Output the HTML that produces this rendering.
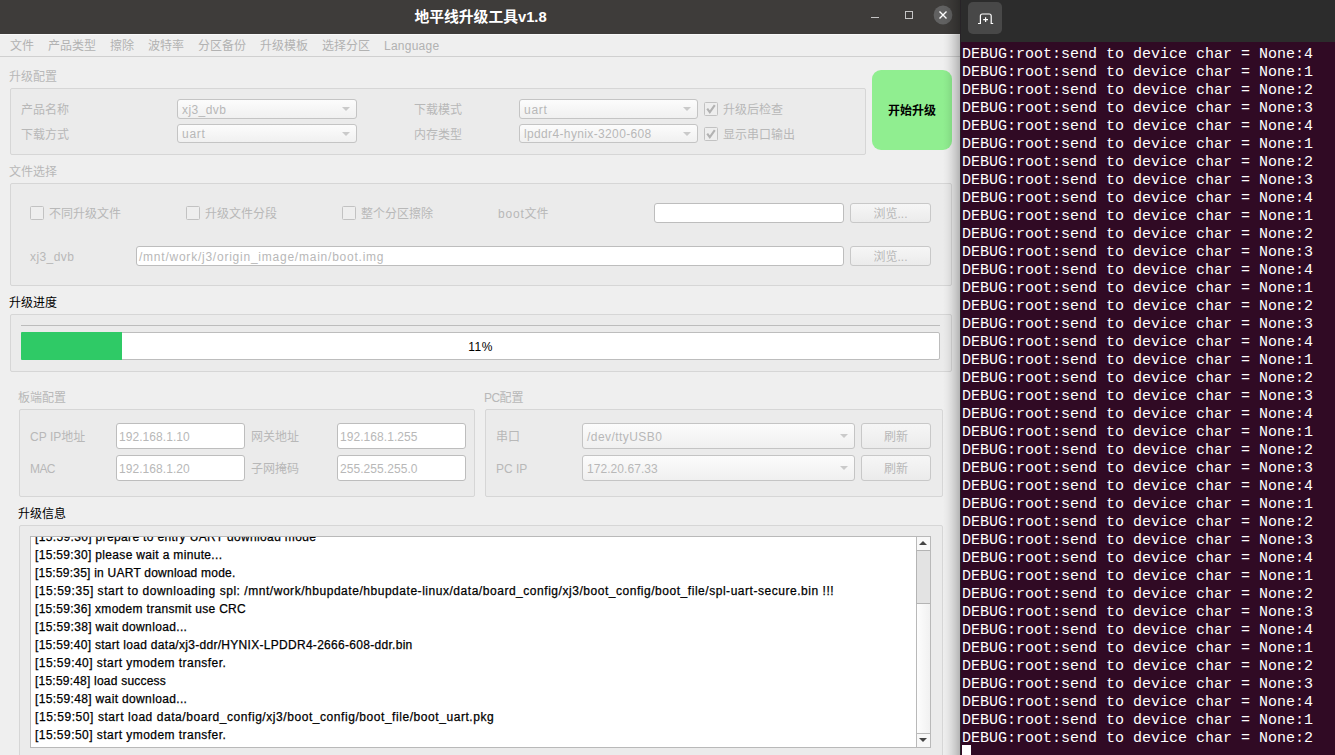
<!DOCTYPE html>
<html lang="zh-CN"><head><meta charset="utf-8"><title>地平线升级工具v1.8</title>
<style>
html,body{margin:0;padding:0;}
body{width:1335px;height:755px;overflow:hidden;position:relative;background:#efefef;
 font-family:"Liberation Sans","Noto Sans CJK SC",sans-serif;font-size:12px;color:#a3a3a3;}
.abs{position:absolute;}
#app{position:absolute;left:0;top:0;width:960px;height:755px;background:#efefef;overflow:hidden;}
#titlebar{position:absolute;left:0;top:0;width:960px;height:34px;background:#3e3c3a;}
#title{position:absolute;left:0;top:0;width:961px;height:34px;line-height:35px;text-align:center;color:#fff;font-weight:bold;font-size:14.8px;}
#menubar{position:absolute;left:0;top:34px;width:960px;height:22px;border-bottom:1px solid #d0d0d0;background:#efefef;box-shadow:inset 0 1px 0 #f9f9f9;}
.mi{position:absolute;top:0;height:22px;line-height:24px;white-space:nowrap;color:#b2b2b2;}
.lbl{position:absolute;white-space:nowrap;height:20px;line-height:20px;color:#b8b8b8;}
.blk{color:#000;}
.gb{position:absolute;box-sizing:border-box;border:1px solid #d6d6d6;background:#ebebeb;border-radius:2px;}
.combo{position:absolute;box-sizing:border-box;border:1px solid #c4c4c4;border-radius:3px;background:linear-gradient(#fcfcfc,#f0f0f0);color:#b8b8b8;white-space:nowrap;padding-left:4px;}
.combo:after{content:"";position:absolute;right:6px;top:50%;margin-top:-2px;border-left:4px solid transparent;border-right:4px solid transparent;border-top:4px solid #cacaca;}
.inp{position:absolute;box-sizing:border-box;border:1px solid #bdbdbd;border-radius:3px;background:#fff;color:#b8b8b8;white-space:nowrap;padding-left:2px;overflow:hidden;}
.btn{position:absolute;box-sizing:border-box;border:1px solid #c8c8c8;border-radius:3px;background:linear-gradient(#f6f6f6,#ebebeb);color:#b8b8b8;text-align:center;white-space:nowrap;}
.cb{position:absolute;box-sizing:border-box;width:14px;height:14px;border:1px solid #c2c2c2;border-radius:1.5px;background:#eeeeee;}
#start{position:absolute;left:872px;top:70px;width:80px;height:80px;border-radius:9px;background:#90ee90;color:#000;font-weight:bold;text-align:center;line-height:82px;font-size:12px;}
#term{position:absolute;left:960px;top:0;width:375px;height:755px;background:#300a24;overflow:hidden;}
#thead{position:absolute;left:0;top:0;width:375px;height:42px;background:#2c2c2c;}
#tedge{position:absolute;left:0;top:0;width:1px;height:755px;background:#272327;}
#tab{position:absolute;left:8px;top:2px;width:34px;height:32px;border-radius:5px;background:#484848;}
#tbody{position:absolute;left:2px;top:46px;font-family:"Liberation Mono","DejaVu Sans Mono",monospace;font-size:15px;color:#fff;}
.tl{height:18px;line-height:18px;white-space:pre;}
#cursor{position:absolute;left:2px;top:745px;width:9px;height:10px;background:#fff;}
#shadow{position:absolute;left:943px;top:0;width:17px;height:755px;background:linear-gradient(to right,rgba(0,0,0,0) 0%,rgba(0,0,0,0.031) 25%,rgba(0,0,0,0.088) 50%,rgba(0,0,0,0.162) 75%,rgba(0,0,0,0.25) 100%);}
#logbox{position:absolute;left:30px;top:536px;width:901px;height:212px;box-sizing:border-box;border:1px solid #b9b9b9;background:#fff;overflow:hidden;color:#000;}
#logtxt{position:absolute;left:4px;top:-9px;-webkit-text-stroke:0.25px #000;}
.ll{height:18px;line-height:18px;white-space:nowrap;}
#sb{position:absolute;left:885px;top:0;width:13px;height:210px;background:linear-gradient(to right,#fdfdfd,#f1f1f1);border-left:1px solid #b9b9b9;}
#sbthumb{position:absolute;left:-1px;top:13px;width:14px;height:54px;background:#e3e3e3;border:1px solid #b4b4b4;border-right:none;box-sizing:border-box;}
.sbbtn{position:absolute;left:0;width:13px;height:13px;background:#f8f8f8;}
.arr{position:absolute;left:2px;width:0;height:0;border-left:4px solid transparent;border-right:4px solid transparent;}
#prog{position:absolute;left:21px;top:332px;width:919px;height:28px;box-sizing:border-box;border:1px solid #bdbdbd;border-radius:2px;background:#fff;color:#000;text-align:center;line-height:28px;}
#progfill{position:absolute;left:-1px;top:-1px;width:101px;height:28px;background:#2fca66;border-radius:1px 0 0 1px;}

</style></head>
<body>
<div id="app">
 <div id="titlebar"></div>
 <div id="title">地平线升级工具<span style="letter-spacing:-0.053px">v1.8</span></div>
 <svg class="abs" style="left:860px;top:0" width="101" height="33" viewBox="0 0 101 33">
  <rect x="11" y="17" width="8" height="1" fill="#c4c4c4"/>
  <rect x="45.5" y="11.5" width="7" height="7" fill="none" stroke="#c4c4c4" stroke-width="1"/>
  <circle cx="83" cy="15" r="9.4" fill="#616161"/>
  <path d="M79.5 11.5 L86.5 18.5 M86.5 11.5 L79.5 18.5" stroke="#fff" stroke-width="1.4" fill="none"/>
 </svg>
 <div id="menubar">
  <span class="mi" style="left:10px">文件</span>
  <span class="mi" style="left:48px">产品类型</span>
  <span class="mi" style="left:110px">擦除</span>
  <span class="mi" style="left:148px">波特率</span>
  <span class="mi" style="left:198px">分区备份</span>
  <span class="mi" style="left:260px">升级模板</span>
  <span class="mi" style="left:322px">选择分区</span>
  <span class="mi" style="left:384px"><span style="letter-spacing:0.238px">Language</span></span>
 </div>

 <div class="lbl" style="left:9px;top:67px">升级配置</div>
 <div class="gb" style="left:10px;top:88px;width:856px;height:67px"></div>
 <div class="lbl" style="left:21px;top:100px">产品名称</div>
 <div class="combo" style="left:177px;top:99px;width:180px;height:20px;line-height:20px"><span style="letter-spacing:0.417px">xj3_dvb</span></div>
 <div class="lbl" style="left:21px;top:125px">下载方式</div>
 <div class="combo" style="left:177px;top:124px;width:180px;height:19px;line-height:19px"><span style="letter-spacing:0.706px">uart</span></div>
 <div class="lbl" style="left:414px;top:100px">下载模式</div>
 <div class="combo" style="left:519px;top:99px;width:179px;height:20px;line-height:20px"><span style="letter-spacing:0.706px">uart</span></div>
 <div class="lbl" style="left:414px;top:125px">内存类型</div>
 <div class="combo" style="left:519px;top:124px;width:179px;height:19px;line-height:19px"><span style="letter-spacing:0.359px">lpddr4-hynix-3200-608</span></div>
 <div class="cb" style="left:704px;top:102px"><svg width="12" height="12" viewBox="0 0 12 12" style="position:absolute;left:0;top:0"><path d="M2.2 5.6 L4.8 9.2 L9.8 2.2" stroke="#b2b2b2" stroke-width="2.1" fill="none"/></svg></div>
 <div class="lbl" style="left:723px;top:100px">升级后检查</div>
 <div class="cb" style="left:704px;top:127px"><svg width="12" height="12" viewBox="0 0 12 12" style="position:absolute;left:0;top:0"><path d="M2.2 5.6 L4.8 9.2 L9.8 2.2" stroke="#b2b2b2" stroke-width="2.1" fill="none"/></svg></div>
 <div class="lbl" style="left:723px;top:125px">显示串口输出</div>
 <div id="start">开始升级</div>

 <div class="lbl" style="left:9px;top:162px">文件选择</div>
 <div class="gb" style="left:10px;top:183px;width:942px;height:103px"></div>
 <div class="cb" style="left:30px;top:206px"></div>
 <div class="lbl" style="left:49px;top:204px">不同升级文件</div>
 <div class="cb" style="left:186px;top:206px"></div>
 <div class="lbl" style="left:205px;top:204px">升级文件分段</div>
 <div class="cb" style="left:342px;top:206px"></div>
 <div class="lbl" style="left:361px;top:204px">整个分区擦除</div>
 <div class="lbl" style="left:498px;top:204px"><span style="letter-spacing:0.805px">boot</span>文件</div>
 <div class="inp" style="left:654px;top:203px;width:190px;height:20px"></div>
 <div class="btn" style="left:850px;top:203px;width:81px;height:20px;line-height:20px">浏览<span style="letter-spacing:0.040px">...</span></div>
 <div class="lbl" style="left:30px;top:247px"><span style="letter-spacing:0.417px">xj3_dvb</span></div>
 <div class="inp" style="left:136px;top:246px;width:708px;height:20px;line-height:20px"><span style="letter-spacing:0.766px">/mnt/work/j3/origin_image/main/boot.img</span></div>
 <div class="btn" style="left:850px;top:246px;width:81px;height:20px;line-height:20px">浏览<span style="letter-spacing:0.040px">...</span></div>

 <div class="lbl blk" style="left:9px;top:293px">升级进度</div>
 <div class="gb" style="left:10px;top:314px;width:942px;height:58px"></div>
 <div class="abs" style="left:21px;top:325px;width:919px;height:1px;background:#bcbcbc"></div>
 <div id="prog"><div id="progfill"></div><span style="letter-spacing:0.509px">11%</span></div>

 <div class="lbl" style="left:18px;top:388px">板端配置</div>
 <div class="gb" style="left:19px;top:409px;width:456px;height:88px"></div>
 <div class="lbl" style="left:30px;top:427px"><span style="letter-spacing:0.035px">CP IP</span>地址</div>
 <div class="inp" style="left:116px;top:423px;width:129px;height:26px;line-height:26px"><span style="letter-spacing:0.060px">192.168.1.10</span></div>
 <div class="lbl" style="left:251px;top:427px">网关地址</div>
 <div class="inp" style="left:337px;top:423px;width:129px;height:26px;line-height:26px"><span style="letter-spacing:0.060px">192.168.1.255</span></div>
 <div class="lbl" style="left:30px;top:459px"><span style="letter-spacing:-0.600px">MAC</span></div>
 <div class="inp" style="left:116px;top:455px;width:129px;height:26px;line-height:26px"><span style="letter-spacing:0.060px">192.168.1.20</span></div>
 <div class="lbl" style="left:251px;top:459px">子网掩码</div>
 <div class="inp" style="left:337px;top:455px;width:129px;height:26px;line-height:26px"><span style="letter-spacing:0.060px">255.255.255.0</span></div>

 <div class="lbl" style="left:484px;top:388px"><span style="letter-spacing:-0.612px">PC</span>配置</div>
 <div class="gb" style="left:485px;top:409px;width:458px;height:88px"></div>
 <div class="lbl" style="left:496px;top:427px">串口</div>
 <div class="combo" style="left:582px;top:423px;width:273px;height:26px;line-height:26px"><span style="letter-spacing:0.447px">/dev/ttyUSB0</span></div>
 <div class="btn" style="left:861px;top:423px;width:70px;height:26px;line-height:26px">刷新</div>
 <div class="lbl" style="left:496px;top:459px"><span style="letter-spacing:-0.009px">PC IP</span></div>
 <div class="combo" style="left:582px;top:455px;width:273px;height:26px;line-height:26px"><span style="letter-spacing:0.060px">172.20.67.33</span></div>
 <div class="btn" style="left:861px;top:455px;width:70px;height:26px;line-height:26px">刷新</div>

 <div class="lbl blk" style="left:18px;top:504px">升级信息</div>
 <div class="gb" style="left:19px;top:525px;width:924px;height:240px"></div>
 <div id="logbox">
  <div id="logtxt">
<div class="ll" style="letter-spacing:0.353px">[15:59:30] prepare to entry UART download mode</div>
<div class="ll" style="letter-spacing:0.329px">[15:59:30] please wait a minute...</div>
<div class="ll" style="letter-spacing:0.228px">[15:59:35] in UART download mode.</div>
<div class="ll" style="letter-spacing:0.537px">[15:59:35] start to downloading spl: /mnt/work/hbupdate/hbupdate-linux/data/board_config/xj3/boot_config/boot_file/spl-uart-secure.bin !!!</div>
<div class="ll" style="letter-spacing:0.303px">[15:59:36] xmodem transmit use CRC</div>
<div class="ll" style="letter-spacing:0.353px">[15:59:38] wait download...</div>
<div class="ll" style="letter-spacing:0.292px">[15:59:40] start load data/xj3-ddr/HYNIX-LPDDR4-2666-608-ddr.bin</div>
<div class="ll" style="letter-spacing:0.461px">[15:59:40] start ymodem transfer.</div>
<div class="ll" style="letter-spacing:0.215px">[15:59:48] load success</div>
<div class="ll" style="letter-spacing:0.353px">[15:59:48] wait download...</div>
<div class="ll" style="letter-spacing:0.561px">[15:59:50] start load data/board_config/xj3/boot_config/boot_file/boot_uart.pkg</div>
<div class="ll" style="letter-spacing:0.461px">[15:59:50] start ymodem transfer.</div>
  </div>
  <div id="sb">
   <div class="sbbtn" style="top:0"></div>
   <div class="sbbtn" style="top:196px;height:13px;border-top:1px solid #b9b9b9"></div>
   <div class="arr" style="top:4px;border-bottom:4px solid #444"></div>
   <div id="sbthumb"></div>
   <div class="arr" style="top:201px;border-top:4px solid #444"></div>
  </div>
 </div>
 <div id="shadow"></div>
</div>
<div id="term">
 <div id="thead"><div id="tab">
  <svg width="34" height="32" viewBox="0 0 34 32"><path d="M10 21.5 H12.4 V14 Q12.4 12 14.4 12 H21.2 Q23.2 12 23.2 14 V21.5 H25.2" stroke="#ffffff" stroke-width="1.2" fill="none"/><path d="M15.2 17.6 H20 M17.6 15.2 V20" stroke="#ffffff" stroke-width="1.2" fill="none"/></svg>
 </div></div>
 <div id="tbody">
<div class="tl">DEBUG:root:send to device char = None:4</div>
<div class="tl">DEBUG:root:send to device char = None:1</div>
<div class="tl">DEBUG:root:send to device char = None:2</div>
<div class="tl">DEBUG:root:send to device char = None:3</div>
<div class="tl">DEBUG:root:send to device char = None:4</div>
<div class="tl">DEBUG:root:send to device char = None:1</div>
<div class="tl">DEBUG:root:send to device char = None:2</div>
<div class="tl">DEBUG:root:send to device char = None:3</div>
<div class="tl">DEBUG:root:send to device char = None:4</div>
<div class="tl">DEBUG:root:send to device char = None:1</div>
<div class="tl">DEBUG:root:send to device char = None:2</div>
<div class="tl">DEBUG:root:send to device char = None:3</div>
<div class="tl">DEBUG:root:send to device char = None:4</div>
<div class="tl">DEBUG:root:send to device char = None:1</div>
<div class="tl">DEBUG:root:send to device char = None:2</div>
<div class="tl">DEBUG:root:send to device char = None:3</div>
<div class="tl">DEBUG:root:send to device char = None:4</div>
<div class="tl">DEBUG:root:send to device char = None:1</div>
<div class="tl">DEBUG:root:send to device char = None:2</div>
<div class="tl">DEBUG:root:send to device char = None:3</div>
<div class="tl">DEBUG:root:send to device char = None:4</div>
<div class="tl">DEBUG:root:send to device char = None:1</div>
<div class="tl">DEBUG:root:send to device char = None:2</div>
<div class="tl">DEBUG:root:send to device char = None:3</div>
<div class="tl">DEBUG:root:send to device char = None:4</div>
<div class="tl">DEBUG:root:send to device char = None:1</div>
<div class="tl">DEBUG:root:send to device char = None:2</div>
<div class="tl">DEBUG:root:send to device char = None:3</div>
<div class="tl">DEBUG:root:send to device char = None:4</div>
<div class="tl">DEBUG:root:send to device char = None:1</div>
<div class="tl">DEBUG:root:send to device char = None:2</div>
<div class="tl">DEBUG:root:send to device char = None:3</div>
<div class="tl">DEBUG:root:send to device char = None:4</div>
<div class="tl">DEBUG:root:send to device char = None:1</div>
<div class="tl">DEBUG:root:send to device char = None:2</div>
<div class="tl">DEBUG:root:send to device char = None:3</div>
<div class="tl">DEBUG:root:send to device char = None:4</div>
<div class="tl">DEBUG:root:send to device char = None:1</div>
<div class="tl">DEBUG:root:send to device char = None:2</div>
 </div>
 <div id="cursor"></div>
 <div id="tedge"></div>
</div>

</body></html>
